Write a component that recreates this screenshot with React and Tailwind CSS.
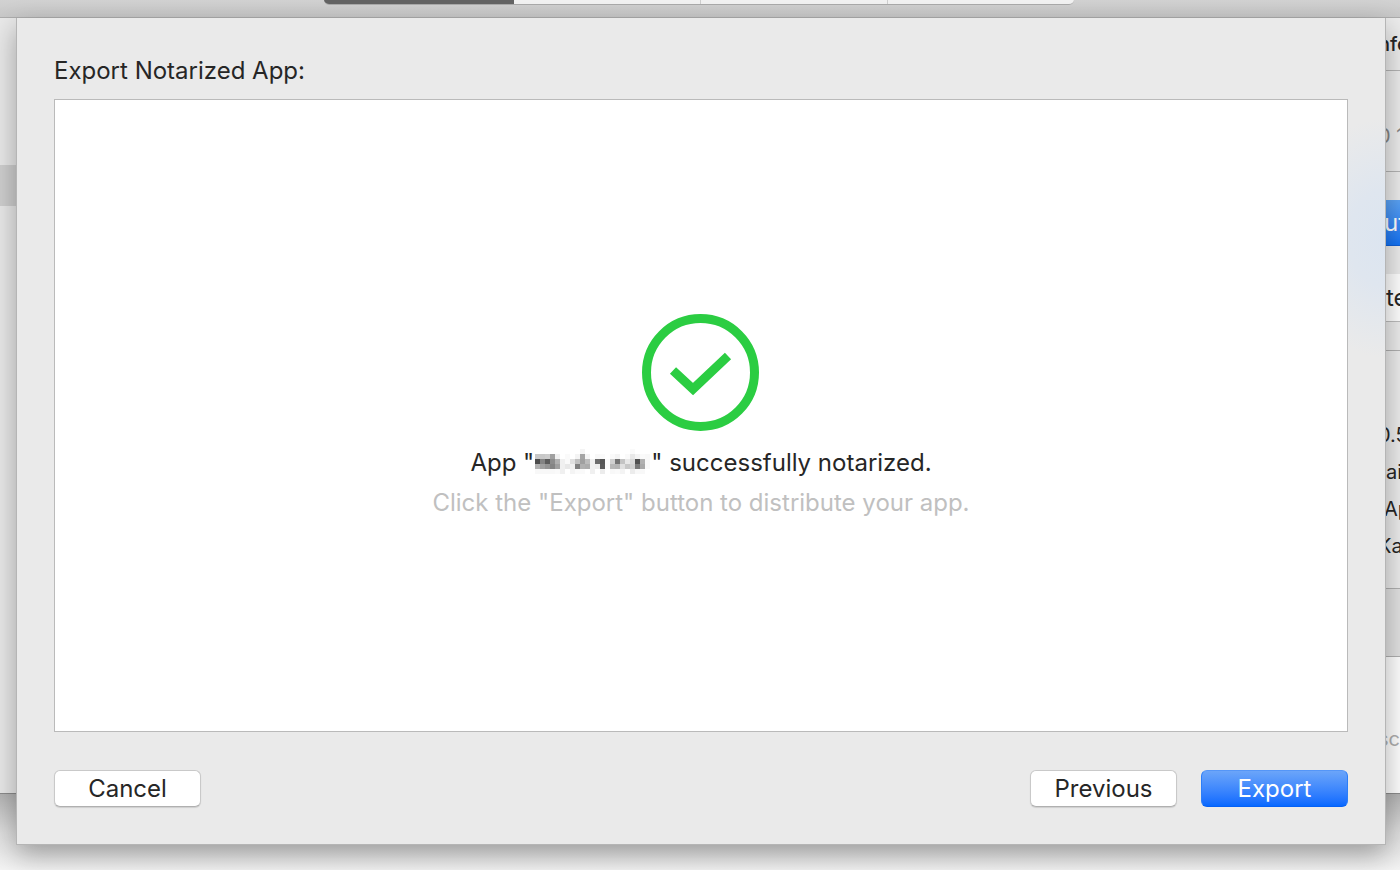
import React from 'react';

// Shades of the pixelated app name, one row per line of blocks
const MOSAIC = [
  ['#fff', '#fff', '#fff', '#fff', '#fff', '#fff', '#fff', '#fff', '#fff', '#f4f4f4', '#fff', '#fff', '#fff', '#fff', '#fff', '#fff', '#fff', '#fff', '#fff', '#fafafa', '#fff', '#fff', '#fff'],
  ['#c8c8c8', '#c8c8c8', '#cccccc', '#a0a0a0', '#f0f0f0', '#fff', '#fafafa', '#fff', '#f4f4f4', '#a4a4a4', '#f4f4f4', '#fff', '#f8f8f8', '#fafafa', '#fff', '#fafafa', '#f4f4f4', '#fff', '#fafafa', '#e8e8e8', '#f4f4f4', '#fafafa', '#f8f8f8'],
  ['#4c4c4c', '#848484', '#5c5c5c', '#8c8c8c', '#b0b0b0', '#f0f0f0', '#fafafa', '#e0e0e0', '#c0c0c0', '#a0a0a0', '#bcbcbc', '#f0f0f0', '#6c6c6c', '#545454', '#fafafa', '#d0d0d0', '#747474', '#c4c4c4', '#e8e8e8', '#d8d8d8', '#505050', '#b0b0b0', '#f8f8f8'],
  ['#b0b0b0', '#a0a0a0', '#949494', '#848484', '#a0a0a0', '#f0f0f0', '#e8e8e8', '#f0f0f0', '#808080', '#b0b0b0', '#acacac', '#f0f0f0', '#ececec', '#585858', '#fafafa', '#b8b8b8', '#b4b4b4', '#e0e0e0', '#c8c8c8', '#d0d0d0', '#787878', '#a8a8a8', '#f8f8f8'],
  ['#f8f8f8', '#f8f8f8', '#f8f8f8', '#f8f8f8', '#fafafa', '#f0f0f0', '#fff', '#f4f4f4', '#fafafa', '#fafafa', '#fff', '#f0f0f0', '#fff', '#ececec', '#fff', '#f8f8f8', '#fafafa', '#f4f4f4', '#fff', '#ececec', '#f8f8f8', '#f8f8f8', '#fff'],
];

const RedactedName = () => (
  <svg className="mb-1" role="img" aria-label="Redacted app name" width="117" height="25" viewBox="0 0 117 25" shapeRendering="crispEdges">
    {MOSAIC.map((row, y) =>
      row.map((fill, x) => <rect key={`${x}-${y}`} x={x * 5 + 1} y={y * 5} width="5" height="5" fill={fill} />)
    )}
  </svg>
);

const SuccessIcon = () => (
  <svg width="118" height="117" viewBox="0 0 118 117" fill="none" stroke="#2bcd42">
    <circle cx="58.5" cy="58.5" r="54" strokeWidth="9" />
    <path d="M31 56.5 L51 75 L86 42" strokeWidth="9" />
  </svg>
);

const PushButton = ({ children, primary }) => (
  <button
    type="button"
    className={`w-[147px] h-[37px] rounded-md border text-2xl leading-8 flex items-center justify-center ${
      primary
        ? 'text-white border-t-[#5596f7] border-x-[#2c7ef8] border-b-[#0460f5] bg-linear-to-b from-[#6ba5f9] to-[#0568ff]'
        : 'text-[#262626] bg-white border-[#c9c9c9] border-b-[#b0b0b0] shadow-[0_1px_1px_rgba(0,0,0,0.12)]'
    }`}
  >
    {children}
  </button>
);

const Toolbar = () => (
  <header className="h-[18px] flex justify-center items-start bg-linear-to-b from-[#d2d2d2] to-[#c8c8c8] border-b border-[#adadad]">
    <div className="w-[750px] h-[5px] mr-0.5 flex rounded-b-lg overflow-hidden border-b border-[#ababab] bg-[#f2f2f2]">
      <button type="button" aria-label="First tab" className="w-[190px] bg-[#646464]" />
      <button type="button" aria-label="Second tab" className="flex-1 border-r border-[#cfcfcf]" />
      <button type="button" aria-label="Third tab" className="flex-1 border-r border-[#cfcfcf]" />
      <button type="button" aria-label="Fourth tab" className="flex-1" />
    </div>
  </header>
);

// Inspector column of the window behind the sheet
const Inspector = () => (
  <aside className="w-6 overflow-hidden whitespace-nowrap flex flex-col text-xl leading-9 text-[#262626] bg-[#ececec]">
    <div className="h-[53px] pt-2 pl-0.5 border-b border-[#b4b4b4] font-medium">nfo</div>
    <div className="h-[101px] pt-[47px] pl-0.5 border-b border-[#b4b4b4] text-[#858585]">0 1</div>
    <button type="button" className="mt-7 h-[46px] pl-2 shrink-0 text-left text-2xl text-white bg-linear-to-b from-[#5ba3f5] to-[#1273f5] border-b border-[#1060d8]">
      ut
    </button>
    <div className="mt-7 h-[48px] pt-1 pl-2.5 shrink-0 text-2xl leading-10 bg-white border-b border-[#bdbdbd]">te</div>
    <div className="mt-7 h-[239px] pt-[66px] shrink-0 border-y border-[#b0b0b0] leading-[37px]">
      <p className="pl-0.5">0.5</p>
      <p className="pl-2.5">ai</p>
      <p className="pl-2">Ap</p>
      <p className="pl-0.5">Ka</p>
    </div>
    <div className="h-[68px] shrink-0 bg-[#e2e2e2] border-b border-[#b0b0b0]" />
    <div className="flex-1 pt-16 pl-0.5 bg-white text-[#b0b0b0]">sc</div>
  </aside>
);

const ArchiveWindow = () => (
  <div className="[grid-area:1/1] flex flex-col">
    <Toolbar />
    <div className="flex-1 flex justify-between bg-[#efefef] border-b border-[#8c8c8c]">
      <nav aria-label="Archives" className="w-6 bg-[#e9e9e9] pt-[147px]">
        <div className="h-[41px] bg-[#cfcfcf]" />
      </nav>
      <Inspector />
    </div>
    <div className="h-[76px] bg-linear-to-b from-[#b4b4b4] via-[#dedede] to-[#f4f4f4]" />
  </div>
);

const ExportSheet = () => (
  <section
    role="dialog"
    aria-labelledby="sheet-title"
    className="[grid-area:1/1] z-10 mt-[18px] mb-[25px] ml-4 mr-3.5 px-[37px] pt-[37px] pb-[37px] flex flex-col border border-t-0 border-[#b5b5b5] bg-[#eaeaea] bg-[radial-gradient(ellipse_90px_120px_at_100%_220px,#dce5f0_0%,#dfe6ef_40%,transparent_100%)] shadow-[0_10px_26px_rgba(0,0,0,0.32)]"
  >
    <h1 id="sheet-title" className="text-2xl leading-8 mb-3">Export Notarized App:</h1>
    <div className="flex-1 flex flex-col items-center justify-center pt-1.5 bg-white border border-[#bababa]">
      <SuccessIcon />
      <p className="mt-3 h-10 flex items-center whitespace-pre text-2xl leading-10">
        App "<RedactedName />" successfully notarized.
      </p>
      <p className="text-2xl leading-10 text-[#c0c0c0]">Click the "Export" button to distribute your app.</p>
    </div>
    <footer className="mt-[38px] flex items-center">
      <PushButton>Cancel</PushButton>
      <div className="ml-auto flex gap-6">
        <PushButton>Previous</PushButton>
        <PushButton primary>Export</PushButton>
      </div>
    </footer>
  </section>
);

const App = () => (
  <main className="min-h-screen grid grid-cols-1 overflow-hidden text-[#262626] font-['Inter','Liberation_Sans',sans-serif]">
    <ArchiveWindow />
    <ExportSheet />
  </main>
);

export default App;
